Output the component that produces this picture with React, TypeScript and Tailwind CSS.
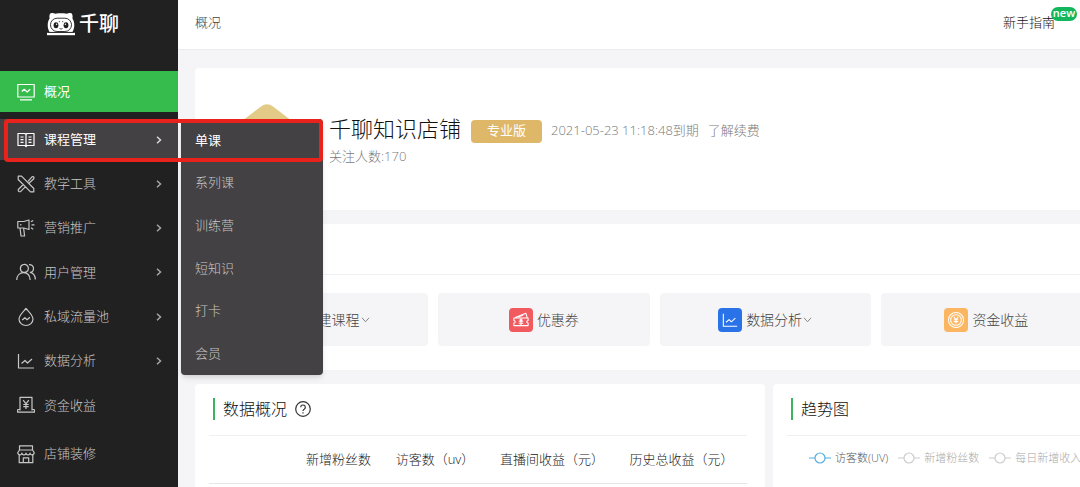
import type { ReactNode } from 'react'

const menu = [
  { label: '课程管理', icon: 'book', open: true },
  { label: '教学工具', icon: 'tools' },
  { label: '营销推广', icon: 'horn' },
  { label: '用户管理', icon: 'users' },
  { label: '私域流量池', icon: 'drop' },
  { label: '数据分析', icon: 'chart' },
  { label: '资金收益', icon: 'money', leaf: true },
]

const submenu = ['单课', '系列课', '训练营', '短知识', '打卡', '会员']

const legend = [
  { label: '访客数(UV)', active: true },
  { label: '新增粉丝数', active: false },
  { label: '每日新增收入', active: false },
]

const icons: Record<string, ReactNode> = {
  overview: <path d="M.8 1.500h16.400v12.500H.8zM3 16.800h12M4.800 8.500l2.400-2.200 3 2.700 3-2.700" />,
  book: (
    <path d="M9 3.500v12M1 2.500h7l1 1 1-1h7v12h-7l-1 1-1-1H1zM3.500 6h3M3.500 8.700h3M3.500 11.400h3M11.500 6h3M11.500 8.700h3M11.500 11.400h3" />
  ),
  tools: (
    <path d="M1.200 1.200h3.300L16.800 13.500v3.300h-3.300L1.200 4.500zM11 6.400L15 1.800q2.600-.6 1.800 2L12.200 8M6.300 9.500l-5 5q-.3 2.600 2.200 2.200l5-5" />
  ),
  horn: (
    <path d="M.8 2.500h6L12 1v9.500L6.800 9h-6zM3 9l1 8h3.600L6.600 9M14.500 5.800h3M14 2.800l2.200-1.400M14 8.800l2.200 1.400M3.800 5v1.500" />
  ),
  users: (
    <path d="M6.500 9.300a4 4 0 1 0 0-7.800 4 4 0 0 0 0 7.800zM-.3 17c.2-4.500 3.100-7.300 6.800-7.300S12.900 12.500 13.200 17M12 1.600c2.400-.3 4.500 1.400 4.500 3.900 0 2-1.300 3.500-3.200 3.900 2.900.8 5 3.600 5 7" />
  ),
  drop: (
    <path d="M9 .5c3 3.500 7 7 7 10.500a7 6.500 0 0 1-14 0C2 7.500 6 4 9 .5zM5.200 12l2.700-2.300 2.200 2 2.800-2.500" />
  ),
  chart: <path d="M1.500 2v14H17M4.500 11.500l3.500-3 2.500 2.500 4.500-4" />,
  money: <path d="M3 14.500V1.300h12v13.200M.6 13.500h2.400M15 13.500h2.400M.6 13.500v2.700h16.800v-2.700M6.200 4.200L9 7.800l2.800-3.600M9 7.800v5.200M6.300 8.500h5.400M6.300 10.700h5.400" />,
  shop: (
    <path d="M2.500.8h13v4.200h-13zM2.500 5L.8 7.500c0 3 4.100 3 4.100.5 0 2.500 4.100 2.500 4.100 0 0 2.500 4.100 2.500 4.100 0 0 2.500 4.100 2.500 4.100-.5L15.500 5M2.200 10v7.700h13.600V10M6.300 17.500v-4.700h5.400v4.700" />
  ),
  ticket: (
    <path d="M1 6.800h16v2.700a1.500 1.500 0 0 0 0 3v2.800H1v-2.800a1.500 1.500 0 0 0 0-3zM2.500 6.300L14.500 1.500l1.500 4.800M9 7.500v7.500M7.500 8.500L9 10l1.500-1.500M6.500 10.500h5M6.500 12.700h5M6 5.500l5.500-2" />
  ),
  coin: (
    <path d="M9 .5a8.500 8.500 0 1 0 0 17A8.500 8.500 0 0 0 9 .5zM9 3a6 6 0 1 0 0 12A6 6 0 0 0 9 3zM6.500 5.500L9 8.500l2.500-3M9 8.500v4.500M6.500 8.800h5M6.500 10.800h5" />
  ),
  plus: <path d="M3 3h12v12H3zM9 6v6M6 9h6" />,
}

function Icon({ name, className = 'size-[18px]' }: { name: string; className?: string }) {
  return (
    <svg viewBox="0 0 18 18" className={`shrink-0 overflow-visible ${className}`} fill="none" stroke="currentColor" strokeWidth="1.200" strokeLinejoin="round">
      {icons[name]}
    </svg>
  )
}

function Logo() {
  return (
    <svg viewBox="0 0 28 24" className="h-6 w-7" fill="none">
      <path d="M2.500 20C-.5 14.500.8 9 2.600 6.500 2 3.500 2.800 1 4.500 1c1.500 0 3 .4 4 .8 3.500-.6 7.500-.6 11 0 1-.4 2.500-.8 4-.8 1.700 0 2.500 2.500 1.900 5.500C27.200 9 28.500 14.500 25.500 20z" fill="#fff" />
      <rect x="3.500" y="6.200" width="21" height="13.300" rx="6.600" fill="#fff" stroke="#222122" strokeWidth=".9" />
      <ellipse cx="9" cy="13.300" rx="2.400" ry="3" fill="#222122" />
      <ellipse cx="19" cy="13.300" rx="2.400" ry="3" fill="#222122" />
      <circle cx="9.600" cy="12.300" r=".7" fill="#fff" />
      <circle cx="18.400" cy="12.300" r=".7" fill="#fff" />
      <path d="M12.500 16.500q1.500 1.300 3 0M12.300 9v1.200M15.700 9v1.200" stroke="#222122" strokeWidth=".8" />
      <path d="M0 20.800h28v2.400H0z" fill="#fff" />
      <path d="M1 20.400h26" stroke="#222122" strokeWidth=".7" />
    </svg>
  )
}

function Arrow() {
  return (
    <svg viewBox="0 0 6 8" className="ml-auto h-2 w-1.5 opacity-80" fill="none" stroke="currentColor" strokeWidth="1.500">
      <path d="M1 .8L4.500 4 1 7.200" />
    </svg>
  )
}

function MenuLink({ label, icon, className = 'text-[#c8c7c8]', arrow }: { label: string; icon: string; className?: string; arrow?: boolean }) {
  return (
    <a href="#" className={`flex h-[41px] items-center gap-[9px] pr-4 pl-[17px] ${className}`}>
      <Icon name={icon} />
      {label}
      {arrow && <Arrow />}
    </a>
  )
}

function Sidebar() {
  return (
    <aside className="relative z-10 flex w-[178px] shrink-0 flex-col bg-[#222122] text-[13px]">
      <div className="flex h-[71px] items-start justify-center gap-1 pt-3 pr-3 text-white">
        <Logo />
        <span className="text-xl leading-6 font-medium">千聊</span>
      </div>
      <nav className="flex flex-col gap-[7px]">
        <MenuLink label="概况" icon="overview" className="bg-[#35bc4c] font-normal text-white" />
        <ul className="flex h-[307px] flex-col justify-between">
          {menu.map((item) => (
            <li key={item.label} className="relative">
              <MenuLink
                label={item.label}
                icon={item.icon}
                arrow={!item.leaf}
                className={item.open ? 'bg-[#434143] font-normal text-white' : 'text-[#c8c7c8]'}
              />
              {item.open && (
                <>
                  <ul className="absolute top-0 left-[181px] grid h-[256px] w-[142px] grid-rows-6 rounded bg-[#434143] shadow-md">
                    {submenu.map((name, i) => (
                      <li key={name} className={`flex items-center pl-3.5 ${i === 0 ? 'font-normal text-white' : 'text-[#c8c7c8]'}`}>
                        <a href="#">{name}</a>
                      </li>
                    ))}
                  </ul>
                  <div className="pointer-events-none absolute top-0 left-1 h-[43px] w-[319px] rounded border-4 border-[#e9231c]" />
                </>
              )}
            </li>
          ))}
        </ul>
        <MenuLink label="店铺装修" icon="shop" />
      </nav>
    </aside>
  )
}

function Tile({ label, icon, color, more }: { label: string; icon: string; color: string; more?: boolean }) {
  return (
    <button className="flex h-[53px] items-center justify-center rounded bg-[#f5f4f6] text-sm text-[#444]">
      <span className={`mr-1 flex size-6 items-center justify-center rounded text-white ${color}`}>
        <Icon name={icon} className="size-4" />
      </span>
      {label}
      {more && (
        <svg viewBox="0 0 9 6" className="ml-px h-1.5 w-[9px]" fill="none" stroke="#888">
          <path d="M1 .8l3.500 4L8 .8" />
        </svg>
      )}
    </button>
  )
}

function PanelTitle({ children }: { children: ReactNode }) {
  return (
    <div className="flex h-[52px] items-center gap-2 border-b border-[#f0eff1] pb-0.5 pl-1 text-base text-[#111]">
      <span className="h-[22px] w-0.5 bg-[#3db45c]" />
      {children}
    </div>
  )
}

export default function App() {
  return (
    <div className="flex h-screen overflow-hidden bg-[#f5f4f6] font-['Open_Sans','Noto_Sans_CJK_SC',sans-serif] font-light">
      <Sidebar />
      <div className="min-w-0 flex-1">
        <header className="flex h-[50px] items-center justify-between border-b border-[#ebeaec] bg-white pr-[25px] pb-1 pl-[17px] text-[13px] text-[#444]">
          <span>概况</span>
          <a href="#" className="relative text-[#111]">
            新手指南
            <span className="absolute -top-1.5 -right-[22px] flex h-3.5 w-[26px] items-center justify-center rounded-full bg-[#12b75c] pb-px text-[11px] font-semibold text-white">
              new
            </span>
          </a>
        </header>

        <main className="flex min-w-[953px] flex-col gap-3.5 px-[17px] pt-[18px]">
          <section className="flex h-[142px] gap-[25px] rounded bg-white pt-9 pl-[35px]">
            <svg viewBox="0 0 74 74" className="size-[74px]">
              <path d="M31 2.500q6-4.500 12 0l17 13q4 3 4 8v27q0 5-4 8l-17 13q-6 4.500-12 0l-17-13q-4-3-4-8v-27q0-5 4-8z" fill="#e3cb87" />
            </svg>
            <div className="pt-2 text-[13px] text-[#7a7a7a]">
              <div className="flex items-center">
                <h1 className="text-[22px] leading-8 font-light text-[#111]">千聊知识店铺</h1>
                <span className="mt-1.5 ml-[10px] flex h-[23px] w-[71px] items-center justify-center rounded bg-[#dfb768] font-normal text-white">专业版</span>
                <span className="mt-1.5 ml-[9px]">2021-05-23 11:18:48到期</span>
                <a href="#" className="mt-1.5 ml-[9px]">了解续费</a>
              </div>
              <p className="leading-6">关注人数:170</p>
            </div>
          </section>

          <section className="rounded bg-white pb-6">
            <div className="h-[51px] border-b border-[#f0eff1]" />
            <div className="grid grid-cols-4 gap-2.5 px-[22px] pt-[18px]">
              <Tile label="新建课程" icon="plus" color="bg-[#35bc4c]" more />
              <Tile label="优惠券" icon="ticket" color="bg-[#f15b60]" />
              <Tile label="数据分析" icon="chart" color="bg-[#2a72e8]" more />
              <Tile label="资金收益" icon="coin" color="bg-[#fbb661]" />
            </div>
          </section>

          <div className="flex min-h-32 gap-2">
            <section className="flex-1 rounded bg-white pr-[18px] pl-3.5">
              <PanelTitle>
                数据概况
                <svg viewBox="0 0 16 16" className="size-4" fill="none" stroke="#333" strokeWidth="1.200">
                  <circle cx="8" cy="8" r="7.300" />
                  <path d="M5.700 6.300a2.300 2.300 0 1 1 3.500 2C8.300 8.800 8 9.200 8 10M8 11.200v1.300" />
                </svg>
              </PanelTitle>
              <table className="w-full table-fixed text-[13px] text-[#222]">
                <thead>
                  <tr className="h-[47px] border-b border-[#e6e5e8]">
                    <td className="w-[82px]" />
                    <th className="w-[95px] font-light">新增粉丝数</th>
                    <th className="w-[98px] font-light">访客数（uv）</th>
                    <th className="w-[136px] font-light">直播间收益（元）</th>
                    <th className="pr-1 font-light">历史总收益（元）</th>
                  </tr>
                </thead>
              </table>
            </section>

            <section className="w-[341px] rounded bg-white pl-3.5">
              <PanelTitle>趋势图</PanelTitle>
              <ul className="flex gap-2.5 pt-[14px] pl-[22px] text-[11px] whitespace-nowrap">
                {legend.map((item) => (
                  <li key={item.label} className={`flex items-center gap-1 ${item.active ? 'text-[#555]' : 'text-[#aaa]'}`}>
                    <svg viewBox="0 0 22 12" className="h-3 w-[22px]" fill="none" stroke={item.active ? '#55aee0' : '#ccc'} strokeWidth="1.200">
                      <path d="M0 6h6M16 6h6" />
                      <circle cx="11" cy="6" r="5" />
                    </svg>
                    {item.label}
                  </li>
                ))}
              </ul>
            </section>
          </div>
        </main>
      </div>
    </div>
  )
}
